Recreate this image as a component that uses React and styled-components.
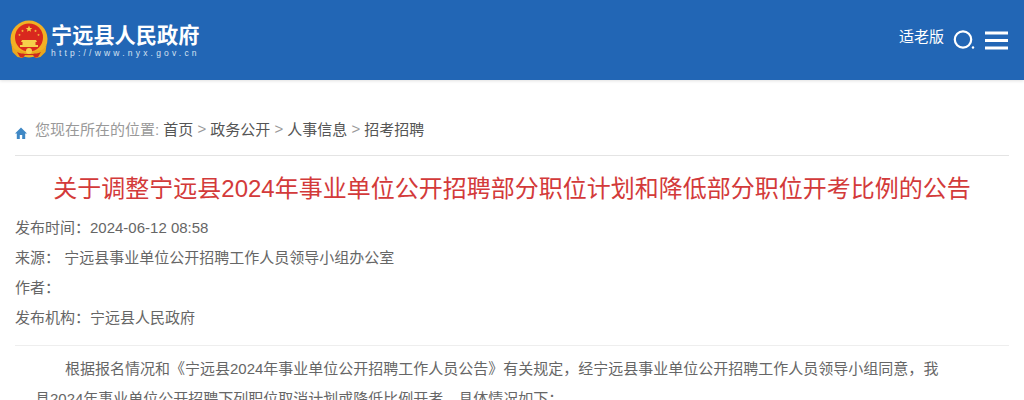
import React from "react";
import styled, { createGlobalStyle } from "styled-components";

const Global = createGlobalStyle`
  html, body { margin: 0; padding: 0; background: #fff; overflow: hidden; height: 400px; }
  body { font-family: "Liberation Sans", "Noto Sans CJK SC", sans-serif; }
`;
const Header = styled.header`
  height: 80px;
  background: #2266b5;
  box-shadow: 0 1px 3px rgba(0,0,0,.12);
  display: flex;
  justify-content: space-between;
  padding: 0 16px 0 10px;
`;
const Logo = styled.div`
  display: flex;
  align-items: center;
  gap: 3px;
  height: 80px;
`;
const LogoText = styled.div`
  display: flex;
  flex-direction: column;
  color: #fff;
  padding-top: 2px;
`;
const LogoName = styled.div`
  font-size: 21.2px;
  font-weight: 700;
  line-height: 24px;
  white-space: nowrap;
`;
const LogoUrl = styled.div`
  font-size: 8.5px;
  line-height: 10px;
  letter-spacing: 3.2px;
  color: #d5e2f2;
  white-space: nowrap;
`;
const Tools = styled.div`
  display: flex;
  align-items: flex-start;
  padding-top: 28px;
`;
const Elder = styled.span`
  color: #fff;
  font-size: 15px;
  line-height: 18px;
  margin-right: 9px;
`;
const SearchIcon = styled.svg`
  display: block;
  flex: none;
  margin-right: 9px;
`;
const MenuIcon = styled.svg`
  display: block;
  flex: none;
`;
const Main = styled.main`
  padding: 36px 15px 0;
`;
const Crumb = styled.nav`
  display: flex;
  align-items: center;
  height: 40px;
  padding-bottom: 15px;
  box-sizing: border-box;
  border-bottom: 1px solid #e4e4e4;
  font-size: 15px;
  color: #999;
  white-space: nowrap;
`;
const CrumbIcon = styled.svg`
  margin: 9px 8px 0 0;
  flex: none;
`;
const CrumbLink = styled.a`
  color: #555;
`;
const Sep = styled.span`
  color: #999;
  margin: 0 4.1px;
`;
const Title = styled.h1`
  margin: 0;
  height: 57px;
  font-size: 24px;
  line-height: 66px;
  font-weight: 400;
  color: #d33a3a;
  text-align: center;
  white-space: nowrap;
`;
const Meta = styled.div`
  display: flex;
  flex-direction: column;
  padding-bottom: 12px;
  border-bottom: 1px solid #eee;
`;
const MetaRow = styled.div`
  height: 30px;
  line-height: 30px;
  font-size: 15px;
  color: #666;
  white-space: pre;
`;
const Body = styled.p`
  margin: 0;
  padding: 8px 70px 0 20px;
  font-size: 15px;
  line-height: 30px;
  color: #666;
  text-indent: 30px;
`;

const star = "M0-1L.29-.31.95-.31.42.12.59.81 0 .42-.59.81-.42.12-.95-.31-.29-.31Z";

export default function App() {
  return (
    <>
      <Global />
      <Header>
        <Logo>
          <svg width="38" height="41" viewBox="0 0 38 41">
            <circle cx="19" cy="19" r="18.500" fill="#f1b024" />
            <circle cx="19" cy="17.500" r="14" fill="#d9281e" />
            <path d={star} fill="#f8d043" transform="translate(19 9) scale(3.400)" />
            <path d={star} fill="#f8d043" transform="translate(12.500 11) scale(1.400)" />
            <path d={star} fill="#f8d043" transform="translate(25.500 11) scale(1.400)" />
            <path d={star} fill="#f8d043" transform="translate(9.500 15) scale(1.300)" />
            <path d={star} fill="#f8d043" transform="translate(28.500 15) scale(1.300)" />
            <path d="M12 20h14l1 2h-1.500v3H28v2H10v-2h2.500v-3H11z" fill="#f6cf4a" />
            <path d="M1.500 25c3 5 6 6 9 5.500 3 1.500 5 2 8.500 2s5.500-.5 8.500-2c3 .5 6-.5 9-5.500l-1 7-5 5-5 1-2-2h-9l-2 2-5-1-5-5z" fill="#eaa61d" />
            <path d="M7 32c3 2 6 1 8 2h8c2-1 5 0 8-2l-3 5-3 .8-2-2.800h-8l-2 2.800-3-.8z" fill="#cd2a1f" />
            <circle cx="19" cy="31" r="3" fill="#f6cf4a" />
          </svg>
          <LogoText>
            <LogoName>宁远县人民政府</LogoName>
            <LogoUrl>http://www.nyx.gov.cn</LogoUrl>
          </LogoText>
        </Logo>
        <Tools>
          <Elder>适老版</Elder>
          <SearchIcon width="22" height="22" viewBox="0 0 22 22">
            <circle cx="10" cy="11.500" r="8.200" fill="none" stroke="#fff" strokeWidth="2.200" />
            <circle cx="20" cy="19.500" r="1.200" fill="#fff" />
          </SearchIcon>
          <MenuIcon width="24" height="22" viewBox="0 0 24 22">
            <path d="M1 5h23M1 12.500h23M1 20h23" stroke="#fff" strokeWidth="3" />
          </MenuIcon>
        </Tools>
      </Header>
      <Main>
        <Crumb>
          <CrumbIcon width="12" height="12" viewBox="0 0 12 12">
            <path d="M6 .500L0 6.500h1.800V12h3V8h2.400v4h3V6.500H12z" fill="#3f88c5" />
          </CrumbIcon>
          您现在所在的位置:&nbsp;
          <CrumbLink>首页</CrumbLink><Sep>&gt;</Sep>
          <CrumbLink>政务公开</CrumbLink><Sep>&gt;</Sep>
          <CrumbLink>人事信息</CrumbLink><Sep>&gt;</Sep>
          <CrumbLink>招考招聘</CrumbLink>
        </Crumb>
        <Title>关于调整宁远县2024年事业单位公开招聘部分职位计划和降低部分职位开考比例的公告</Title>
        <Meta>
          <MetaRow>发布时间：2024-06-12 08:58</MetaRow>
          <MetaRow>来源： 宁远县事业单位公开招聘工作人员领导小组办公室</MetaRow>
          <MetaRow>作者：</MetaRow>
          <MetaRow>发布机构：宁远县人民政府</MetaRow>
        </Meta>
        <Body>根据报名情况和《宁远县2024年事业单位公开招聘工作人员公告》有关规定，经宁远县事业单位公开招聘工作人员领导小组同意，我县2024年事业单位公开招聘下列职位取消计划或降低比例开考，具体情况如下：</Body>
      </Main>
    </>
  );
}
